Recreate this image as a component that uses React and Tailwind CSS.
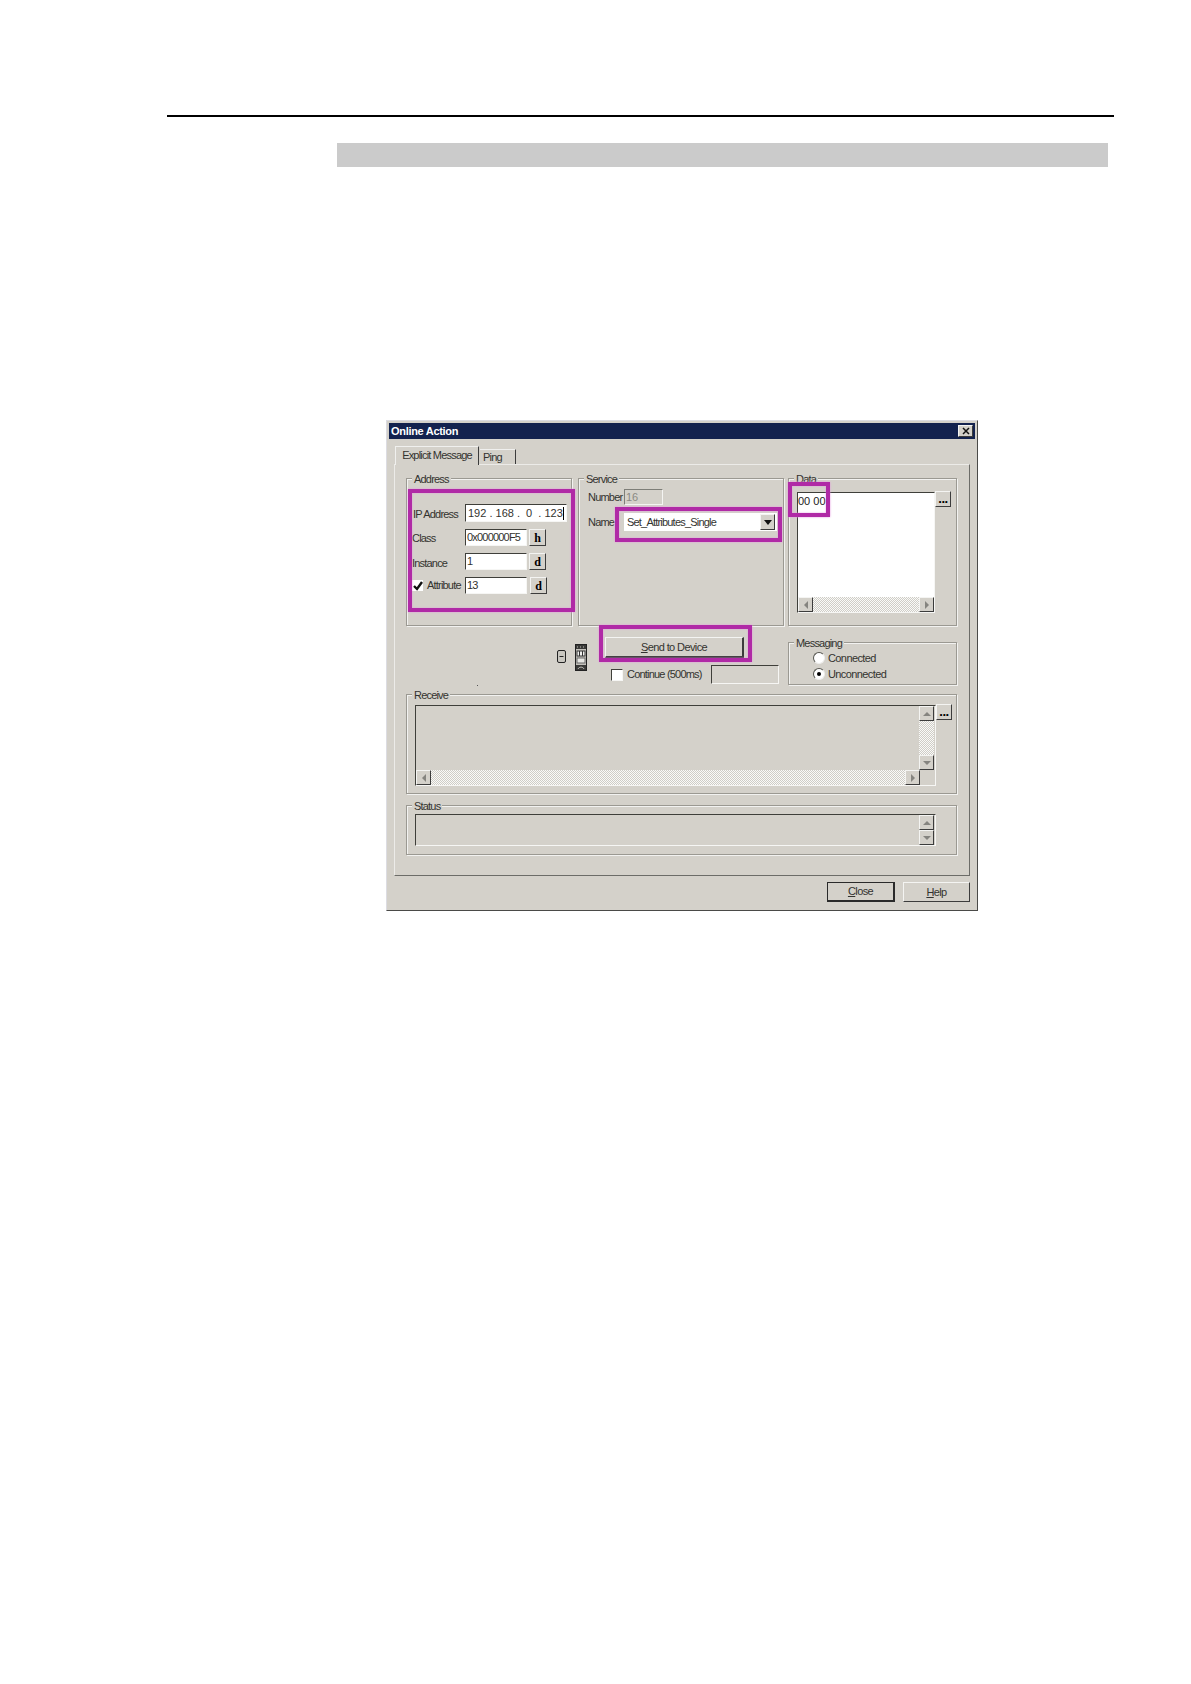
import React from "react";

const raised = "border border-t-[#f4f4f2] border-l-[#f4f4f2] border-r-[#3c3c3c] border-b-[#3c3c3c] bg-[#d4d1ca]";
const sunken = "border border-t-[#3f3f3a] border-l-[#3f3f3a] border-r-[#f6f6f4] border-b-[#f6f6f4]";
const hatch = "bg-[repeating-conic-gradient(#cfcdc7_0_25%,#fafaf8_0_50%)] bg-[length:2px_2px]";
const txt = "text-[11px] leading-[13px] tracking-[-0.6px] text-[#33332f] whitespace-nowrap";
const tight = "text-[11px] leading-[13px] tracking-[-0.8px] text-[#33332f] whitespace-nowrap";

function Group({ title, className, children }) {
  return (
    <div className={"relative border border-[#9b9992] shadow-[inset_1px_1px_0_#f2f2f0,1px_1px_0_#f2f2f0] " + className}>
      <span className={"absolute -top-[6px] left-[5px] bg-[#d4d1ca] px-[2px] " + tight}>{title}</span>
      {children}
    </div>
  );
}

function Field({ className, children }) {
  return (
    <div className={"flex items-center bg-white pl-[1px] overflow-hidden " + sunken + " " + tight + " " + className}>{children}</div>
  );
}

function CharBtn({ ch, className }) {
  return (
    <div className={"flex items-center justify-center w-[17px] font-['Liberation_Serif',serif] text-[12px] font-bold text-black " + raised + " " + className}>{ch}</div>
  );
}

function Dots({ className }) {
  return <div className={"flex items-end justify-center pb-[3px] w-[16px] h-[16px] text-[13px] leading-[8px] font-bold tracking-[-0.5px] text-black " + raised + " " + className}>...</div>;
}

function Arrow({ dir, className }) {
  const pts = { up: "0,5 4,1 8,5", down: "0,1 8,1 4,5", left: "5,0 5,8 1,4", right: "1,0 1,8 5,4" }[dir];
  const dims = dir === "up" || dir === "down" ? "w-[8px] h-[6px]" : "w-[6px] h-[8px]";
  const vb = dir === "up" || dir === "down" ? "0 0 8 6" : "0 0 6 8";
  return (
    <div className={"flex items-center justify-center w-[15px] h-[15px] shrink-0 " + raised + " " + className}>
      <svg viewBox={vb} className={dims}><polygon points={pts} fill="#85847f" /></svg>
    </div>
  );
}

function Highlight({ className }) {
  return <div className={"absolute border-[4px] border-[#b02aa6] shadow-[0_0_2px_#e596df,inset_0_0_2px_#e596df] " + className} />;
}

function U({ children }) {
  return <span className="underline">{children}</span>;
}

function Radio({ checked }) {
  return (
    <div className="flex items-center justify-center w-[12px] h-[12px] rounded-full bg-white border border-t-[#55554f] border-l-[#55554f] border-r-[#eeeeec] border-b-[#eeeeec]">
      {checked && <div className="w-[4px] h-[4px] rounded-full bg-black" />}
    </div>
  );
}

export default function App() {
  return (
    <div className="min-h-[1684px] bg-white font-['Liberation_Sans',sans-serif] pt-[115px] overflow-hidden">
      <div className="ml-[167px] w-[947px] h-[2px] bg-black" />
      <div className="ml-[337px] mt-[26px] w-[771px] h-[24px] bg-[#cbcbcb]" />

      <div className="relative ml-[386px] mt-[253px] w-[592px] h-[491px] p-[2px] bg-[#d4d1ca] border border-t-[#dcdce2] border-l-[#dcdce2] border-r-[#4a4a48] border-b-[#4a4a48]">
        <div className="flex items-center justify-between h-[16px] bg-[#13224e] pl-[2px] pr-[2px]">
          <span className="text-[11px] font-bold tracking-[-0.3px] text-white leading-none">Online Action</span>
          <div className={"flex items-center justify-center w-[15px] h-[12px] " + raised}>
            <svg viewBox="0 0 8 8" className="w-[8px] h-[8px]"><path d="M1 1L7 7M7 1L1 7" stroke="#111" strokeWidth="1.5" /></svg>
          </div>
        </div>

        <div className="flex items-end ml-[6px] mt-[7px] h-[18px]">
          <div className={"relative -mb-[1px] z-10 flex items-center justify-center w-[84px] h-[19px] pb-[2px] bg-[#d4d1ca] border-t border-l border-r border-t-[#f0f0ee] border-l-[#f0f0ee] border-r-[#3c3c3c] " + tight}>Explicit Message</div>
          <div className={"flex items-center ml-[1px] pl-[3px] w-[36px] h-[15px] border-t border-r border-t-[#f0f0ee] border-r-[#3c3c3c] " + tight}>Ping</div>
        </div>

        <div className="ml-[5px] w-[576px] h-[412px] pl-[11px] pt-[13px] border border-t-[#ecebe8] border-l-[#ecebe8] border-r-[#6c6c68] border-b-[#6c6c68]">
          <div className="flex w-[551px]">
            <Group title="Address" className="w-[166px] h-[148px] pl-[5px] pt-[25px] flex flex-col gap-[7px]">
              <div className="flex h-[18px]">
                <span className={"w-[53px] pl-[1px] pt-[4px] " + tight}>IP Address</span>
                <Field className="w-[102px] h-[18px] pl-[2px] tracking-[0px]">
                  192 . 168 .&nbsp;&nbsp;0&nbsp;&nbsp;. 123<span className="w-[1px] h-[13px] bg-black" />
                </Field>
              </div>
              <div className="flex h-[17px]">
                <span className={"w-[53px] pt-[3px] " + tight}>Class</span>
                <Field className="w-[62px]">0x000000F5</Field>
                <CharBtn ch="h" className="ml-[2px]" />
              </div>
              <div className="flex h-[17px]">
                <span className={"w-[53px] pt-[4px] " + tight}>Instance</span>
                <Field className="w-[62px]">1</Field>
                <CharBtn ch="d" className="ml-[2px]" />
              </div>
              <div className="flex h-[17px]">
                <div className="w-[53px] flex items-center">
                  <div className="flex items-center justify-center w-[11px] h-[11px] bg-white">
                    <svg viewBox="0 0 10 10" className="w-[10px] h-[10px]"><path d="M1 5L4 8L9 1" fill="none" stroke="#111" strokeWidth="2.4" /></svg>
                  </div>
                  <span className={"ml-[4px] " + tight}>Attribute</span>
                </div>
                <Field className="w-[62px]">13</Field>
                <CharBtn ch="d" className="ml-[3px]" />
              </div>
            </Group>

            <Group title="Service" className="ml-[6px] w-[206px] h-[148px] pl-[9px] pt-[10px] flex flex-col gap-[8px]">
              <div className="flex items-center h-[16px]">
                <span className={"w-[36px] pt-[1px] " + tight}>Number</span>
                <div className="flex items-center w-[39px] h-[16px] pl-[1px] text-[11px] text-[#8a8a84] border border-t-[#7e7e78] border-l-[#7e7e78] border-r-[#f4f4f2] border-b-[#f4f4f2]">16</div>
              </div>
              <div className="flex items-center h-[18px]">
                <span className={"w-[36px] " + tight}>Name</span>
                <div className={"flex items-center justify-between w-[153px] h-[18px] bg-white pl-[3px] pr-[2px] " + tight}>
                  <span>Set_Attributes_Single</span>
                  <div className={"flex items-center justify-center w-[15px] h-[16px] " + raised}>
                    <svg viewBox="0 0 8 5" className="w-[8px] h-[5px]"><polygon points="0,0 8,0 4,5" fill="#111" /></svg>
                  </div>
                </div>
              </div>
            </Group>

            <Group title="Data" className="ml-[4px] w-[169px] h-[148px] pl-[8px] pt-[13px] flex items-start">
              <div className={"flex flex-col justify-between w-[138px] h-[121px] bg-white " + sunken}>
                <span className="pl-[0px] pt-[2px] text-[11px] leading-[13px] text-[#222]">00 00</span>
                <div className="flex items-center">
                  <Arrow dir="left" />
                  <div className={"flex-1 h-[15px] " + hatch} />
                  <Arrow dir="right" />
                </div>
              </div>
              <Dots className="-mt-[1px]" />
            </Group>
          </div>

          <div className="flex justify-between w-[551px] h-[68px]">
            <div className="flex pl-[151px]">
              <svg viewBox="0 0 9 13" className="w-[9px] h-[13px] mt-[24px]">
                <path d="M4.5 -8V0M4.5 13V20M9 6.5H18" stroke="#c8c6bf" />
                <rect x="0.5" y="0.5" width="8" height="12" rx="1.5" fill="#c9c7c0" stroke="#222" />
                <path d="M2.5 6.5H6.5" stroke="#222" />
              </svg>
              <svg viewBox="0 0 12 27" className="w-[12px] h-[27px] mt-[18px] ml-[9px]">
                <rect x="0.5" y="0.5" width="11" height="26" fill="#c4c2bc" stroke="#222" />
                <rect x="1" y="1" width="10" height="4" fill="#3a3a38" />
                <path d="M2 3H3M5 3H6M8 3H9" stroke="#c4c2bc" />
                <rect x="2" y="7" width="8" height="5" fill="#f0f0ee" stroke="#333" />
                <path d="M4.5 7V12M7.5 7V12" stroke="#333" />
                <rect x="2" y="14" width="8" height="5" fill="#e8e8e4" stroke="#666" />
                <rect x="1" y="21" width="10" height="5" fill="#3a3a38" />
                <path d="M3 25C4 22.5 8 22.5 9 25" fill="none" stroke="#c4c2bc" />
              </svg>
              <div className="ml-[18px] w-[174px] pt-[11px]">
                <div className={"flex items-center justify-center w-[139px] h-[21px] border-r-2 border-b-2 " + raised + " " + txt}>
                  <span><U>S</U>end to Device</span>
                </div>
                <div className="flex items-center h-[19px] mt-[7px] pl-[6px]">
                  <div className={"w-[12px] h-[12px] bg-white " + sunken} />
                  <span className={"ml-[4px] " + tight}>Continue (500ms)</span>
                  <div className={"ml-auto w-[68px] h-[19px] " + sunken} />
                </div>
              </div>
            </div>
            <div className="pt-[16px]">
              <Group title="Messaging" className="w-[169px] h-[43px] pl-[24px] pt-[9px] flex flex-col gap-[4px]">
                <div className="flex items-center gap-[3px] h-[12px]">
                  <Radio />
                  <span className={txt}>Connected</span>
                </div>
                <div className="flex items-center gap-[3px] h-[12px]">
                  <Radio checked />
                  <span className={txt}>Unconnected</span>
                </div>
              </Group>
            </div>
          </div>

          <Group title="Receive" className="w-[551px] h-[100px] pl-[8px] pt-[10px] flex items-start">
            <div className={"flex flex-col w-[521px] h-[81px] " + sunken}>
              <div className="flex h-[64px]">
                <div className="flex-1" />
                <div className="flex flex-col w-[15px] mr-[1px]">
                  <Arrow dir="up" />
                  <div className={"flex-1 " + hatch} />
                  <Arrow dir="down" />
                </div>
              </div>
              <div className="flex h-[15px] pr-[15px]">
                <Arrow dir="left" />
                <div className={"flex-1 " + hatch} />
                <Arrow dir="right" />
              </div>
            </div>
            <Dots className="-mt-[1px]" />
          </Group>

          <Group title="Status" className="mt-[11px] w-[551px] h-[50px] pl-[8px] pt-[8px]">
            <div className={"flex justify-end items-center w-[521px] h-[32px] pr-[1px] " + sunken}>
              <div className="flex flex-col w-[15px]">
                <Arrow dir="up" className="h-[14px]" />
                <Arrow dir="down" className="h-[14px]" />
              </div>
            </div>
          </Group>
        </div>

        <div className="flex justify-end gap-[8px] pr-[5px] mt-[6px]">
          <div className={"flex items-center justify-center w-[68px] h-[20px] border border-r-2 border-b-2 border-[#2a2a2a] bg-[#d4d1ca] " + txt}>
            <span><U>C</U>lose</span>
          </div>
          <div className={"flex items-center justify-center w-[67px] h-[20px] " + raised + " " + txt}>
            <span><U>H</U>elp</span>
          </div>
        </div>

        <Highlight className="left-[21px] top-[68px] w-[167px] h-[123px]" />
        <Highlight className="left-[228px] top-[86px] w-[167px] h-[35px]" />
        <Highlight className="left-[401px] top-[61px] w-[42px] h-[35px]" />
        <Highlight className="left-[212px] top-[204px] w-[153px] h-[37px]" />
        <div className="absolute left-[90px] top-[264px] w-[1px] h-[1px] bg-[#555]" />
      </div>
    </div>
  );
}
